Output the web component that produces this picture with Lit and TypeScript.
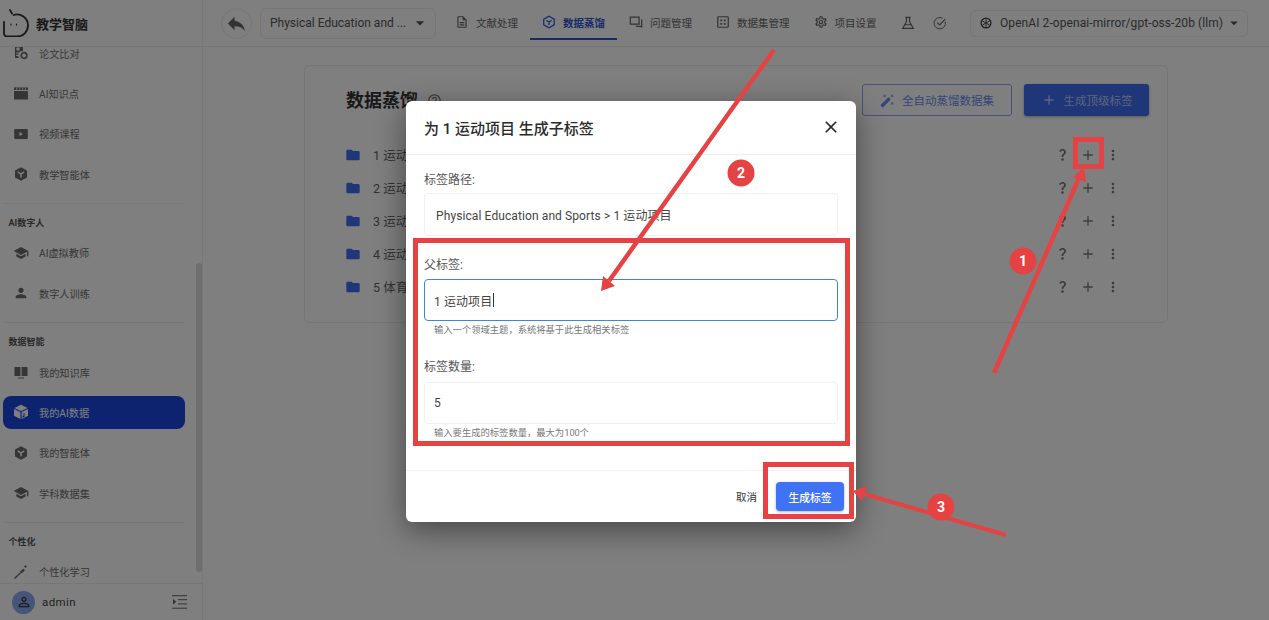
import { LitElement, html, css, svg } from "lit";
import { customElement } from "lit/decorators.js";

const P = {
  reply: "M10 9V5l-7 7 7 7v-4.1c5 0 8.5 1.6 11 5.1-1-5-4-10-11-11z",
  drop: "M7 10l5 5 5-5z",
  folder: "M10 4H4c-1.1 0-1.99.9-1.99 2L2 18c0 1.1.9 2 2 2h16c1.1 0 2-.9 2-2V8c0-1.1-.9-2-2-2h-8l-2-2z",
  close: "M19 6.41L17.59 5 12 10.59 6.41 5 5 6.41 10.59 12 5 17.59 6.41 19 12 13.41 17.59 19 19 17.59 13.41 12z",
  add: "M19 13h-6v6h-2v-6H5v-2h6V5h2v6h6v2z",
  more: "M12 8c1.1 0 2-.9 2-2s-.9-2-2-2-2 .9-2 2 .9 2 2 2zm0 2c-1.1 0-2 .9-2 2s.9 2 2 2 2-.9 2-2-.9-2-2-2zm0 6c-1.1 0-2 .9-2 2s.9 2 2 2 2-.9 2-2-.9-2-2-2z",
  school: "M5 13.18v4L12 21l7-3.82v-4L12 17l-7-3.82zM12 3 1 9l11 6 9-4.91V17h2V9L12 3z",
  person: "M12 12c2.21 0 4-1.79 4-4s-1.79-4-4-4-4 1.79-4 4 1.79 4 4 4zm0 2c-2.67 0-8 1.34-8 4v2h16v-2c0-2.66-5.33-4-8-4z",
  personO: "M12 5.9c1.16 0 2.1.94 2.1 2.1s-.94 2.1-2.1 2.1S9.9 9.16 9.9 8s.94-2.1 2.1-2.1m0 9c2.97 0 6.1 1.46 6.1 2.1v1.1H5.9V17c0-.64 3.13-2.1 6.1-2.1M12 4C9.79 4 8 5.79 8 8s1.79 4 4 4 4-1.79 4-4-1.79-4-4-4zm0 9c-2.67 0-8 1.34-8 4v3h16v-3c0-2.66-5.33-4-8-4z",
  wand: "M7.5 5.6 10 7 8.6 4.5 10 2 7.5 3.4 5 2l1.4 2.5L5 7zm12 9.8L17 14l1.4 2.5L17 19l2.5-1.4L22 19l-1.4-2.5L22 14zM22 2l-2.5 1.4L17 2l1.4 2.5L17 7l2.5-1.4L22 7l-1.4-2.5zm-7.63 5.29a.996.996 0 0 0-1.41 0L1.29 18.96a.996.996 0 0 0 0 1.41l2.34 2.34c.39.39 1.02.39 1.41 0L16.7 11.05a.996.996 0 0 0 0-1.41l-2.33-2.35z",
  help: "M11 18h2v-2h-2v2zm1-16C6.48 2 2 6.48 2 12s4.48 10 10 10 10-4.48 10-10S17.52 2 12 2zm0 18c-4.41 0-8-3.59-8-8s3.59-8 8-8 8 3.59 8 8-3.59 8-8 8zm0-14c-2.21 0-4 1.79-4 4h2c0-1.1.9-2 2-2s2 .9 2 2c0 2-3 1.75-3 5h2c0-2.25 3-2.5 3-5 0-2.21-1.79-4-4-4z",
  q: "M11.07 12.85c.77-1.39 2.25-2.21 3.11-3.44.91-1.29.4-3.7-2.18-3.7-1.69 0-2.52 1.28-2.87 2.34L6.54 6.96C7.25 4.83 9.18 3 11.99 3c2.35 0 3.96 1.07 4.78 2.41.7 1.15 1.11 3.3.03 4.9-1.2 1.77-2.35 2.31-2.97 3.45-.25.46-.35.76-.35 2.24h-2.89c-.01-.78-.13-2.05.48-3.15zM14 20c0 1.1-.9 2-2 2s-2-.9-2-2 .9-2 2-2 2 .9 2 2z",
  doc: "M8 16h8v2H8zm0-4h8v2H8zm6-10H6c-1.1 0-2 .9-2 2v16c0 1.1.89 2 1.99 2H18c1.1 0 2-.9 2-2V8l-6-6zm4 18H6V4h7v5h5v11z",
  gear: "M19.43 12.98c.04-.32.07-.64.07-.98 0-.34-.03-.66-.07-.98l2.11-1.65c.19-.15.24-.42.12-.64l-2-3.46c-.09-.16-.26-.25-.44-.25-.06 0-.12.01-.17.03l-2.49 1c-.52-.4-1.08-.73-1.69-.98l-.38-2.65C14.46 2.18 14.25 2 14 2h-4c-.25 0-.46.18-.49.42l-.38 2.65c-.61.25-1.17.59-1.69.98l-2.49-1c-.06-.02-.12-.03-.18-.03-.17 0-.34.09-.43.25l-2 3.46c-.13.22-.07.49.12.64l2.11 1.65c-.04.32-.07.65-.07.98 0 .33.03.66.07.98l-2.11 1.65c-.19.15-.24.42-.12.64l2 3.46c.09.16.26.25.44.25.06 0 .12-.01.17-.03l2.49-1c.52.4 1.08.73 1.69.98l.38 2.65c.03.24.24.42.49.42h4c.25 0 .46-.18.49-.42l.38-2.65c.61-.25 1.17-.59 1.69-.98l2.49 1c.06.02.12.03.18.03.17 0 .34-.09.43-.25l2-3.46c.12-.22.07-.49-.12-.64l-2.11-1.65zm-1.98-1.71c.04.31.05.52.05.73 0 .21-.02.43-.05.73l-.14 1.13.89.7 1.08.84-.7 1.21-1.27-.51-1.04-.42-.9.68c-.43.32-.84.56-1.25.73l-1.06.43-.16 1.13-.2 1.35h-1.4l-.19-1.35-.16-1.13-1.06-.43c-.43-.18-.83-.41-1.23-.71l-.91-.7-1.06.43-1.27.51-.7-1.21 1.08-.84.89-.7-.14-1.13c-.03-.31-.05-.54-.05-.74s.02-.43.05-.73l.14-1.13-.89-.7-1.08-.84.7-1.21 1.27.51 1.04.42.9-.68c.43-.32.84-.56 1.25-.73l1.06-.43.16-1.13.2-1.35h1.39l.19 1.35.16 1.13 1.06.43c.43.18.83.41 1.23.71l.91.7 1.06-.43 1.27-.51.7 1.21-1.07.85-.89.7.14 1.13zM12 8c-2.21 0-4 1.79-4 4s1.79 4 4 4 4-1.79 4-4-1.79-4-4-4zm0 6c-1.1 0-2-.9-2-2s.9-2 2-2 2 .9 2 2-.9 2-2 2z",
};

const icon = (d: string, size: number, cls = "") =>
  html`<svg class=${cls} width=${size} height=${size} viewBox="0 0 24 24" fill="currentColor"><path d=${d}></path></svg>`;

const box = (inner: unknown, size = 16) =>
  html`<svg width=${size} height=${size} viewBox="0 0 16 16" fill="none">${inner}</svg>`;

const NAV: Record<string, unknown> = {
  compare: box(svg`<path fill="#6b6b6b" d="M2 1h8v5.2a4 4 0 0 0-3.6 6.8H2z"/><rect x="3.5" y="2.5" width="3" height="3" fill="#fefefe"/><circle cx="11" cy="10.5" r="2.8" stroke="#6b6b6b" stroke-width="1.7"/><path stroke="#fefefe" d="M3 8h3M3 10.5h2.5"/>`),
  clap: box(svg`<rect x="1" y="6" width="14" height="8.5" rx=".6" fill="#6b6b6b"/><path fill="#6b6b6b" d="M1 2.4h14V5H1z"/><path stroke="#fefefe" stroke-width=".8" d="M4 2.4 3.2 5M7 2.4 6.2 5M10 2.4 9.2 5M13 2.4 12.2 5"/>`),
  video: box(svg`<rect x="1.2" y="3" width="13.6" height="10" rx="1" fill="#6b6b6b"/><path fill="#fefefe" d="M6.5 6v4l3.4-2z"/>`),
  agent: box(svg`<path fill="#6b6b6b" d="M8 1.2 14 4.4v7.2L8 14.8 2 11.6V4.4z"/><path stroke="#fefefe" stroke-width="1.5" d="M4.8 5.8 8 8l3.2-2.2M8 8v3.4"/>`),
  book: box(svg`<path fill="#6b6b6b" d="M1.5 3h5.9v9H1.5zM8.6 3h5.9v9H8.6z"/><path stroke="#6b6b6b" d="M5 14h6"/>`),
  cube: box(svg`<path fill="#fefefe" d="M8 .8 14.6 4 8 7.2 1.4 4z"/><path fill="#fefefe" d="M1 5l6.4 3.1V15L1 11.8z"/><path fill="#fefefe" d="M15 5 8.6 8.1V15l6.4-3.2z"/><path stroke="#1a47e0" d="M11 9v3.6"/><circle cx="10.3" cy="12.6" r=".9" fill="#1a47e0"/>`),
  wandS: box(svg`<path stroke="#6b6b6b" stroke-width="1.4" d="M1.5 14.5 11 5.5"/><path stroke="#6b6b6b" stroke-width="2.4" d="M8 8.4l3-2.9"/><path stroke="#6b6b6b" stroke-width=".8" d="M12.5 1v3M11 2.5h3"/>`),
};

const GROUPS = [
  { items: [["论文比对", "compare"], ["AI知识点", "clap"], ["视频课程", "video"], ["教学智能体", "agent"]] },
  { title: "AI数字人", items: [["AI虚拟教师", "school"], ["数字人训练", "person"]] },
  { title: "数据智能", items: [["我的知识库", "book"], ["我的AI数据", "cube"], ["我的智能体", "agent"], ["学科数据集", "school"]] },
  { title: "个性化", items: [["个性化学习", "wandS"]] },
];

const ROWS = ["1 运动项目", "2 运动技能", "3 运动训练", "4 运动竞赛", "5 体育文化"];

@customElement("app-root")
export class AppRoot extends LitElement {
  static styles = css`
    :host { display: block; width: 1269px; height: 620px; position: relative; overflow: hidden;
      font-family: Roboto, "Noto Sans CJK SC", sans-serif; color: #444; background: #fefefe; }
    svg { display: block; flex: none; }
    .page { display: flex; width: 100%; height: 100%; }
    aside { width: 203px; flex: none; display: flex; flex-direction: column; border-right: 1px solid #f0f0f0; box-sizing: border-box; position: relative; }
    .brand { height: 47px; flex: none; box-sizing: border-box; display: flex; align-items: center; gap: 6px; padding-left: 2px; border-bottom: 1px solid #eee; font-size: 13px; font-weight: 700; color: #333; }
    .nav { flex: 1; min-height: 0; overflow: hidden; }
    .navin { margin-top: -14px; }
    .group { padding-bottom: 9px; margin-bottom: 8.5px; border-bottom: 1px solid #f0f0f0; width: 182px; margin-left: 3px; }
    .group:last-child { border-bottom: 0; }
    .gtitle { height: 20px; line-height: 20px; font-size: 9px; font-weight: 700; color: #555; padding-left: 5.5px; }
    .row { height: 40.33px; display: flex; align-items: center; }
    .item { height: 33px; width: 100%; border-radius: 8px; display: flex; align-items: center; gap: 10px; padding-left: 10px; box-sizing: border-box; font-size: 10.2px; color: #6e6e6e; }
    .item.active { background: #1a47e0; color: #fefefe; }
    .item svg { color: #6b6b6b; }
    .sb { position: absolute; left: 196px; top: 263px; width: 6px; height: 309px; border-radius: 3px; background: #dcdcdc; }
    .foot { height: 37px; flex: none; box-sizing: border-box; border-top: 1px solid #ececec; display: flex; align-items: center; padding: 0 15px 0 12px; gap: 7px; font-size: 11.5px; color: #444; letter-spacing: .4px; }
    .avatar { width: 23px; height: 23px; border-radius: 50%; background: #8fa8f5; display: flex; align-items: center; justify-content: center; color: #333; }
    .collapse { margin-left: auto; }
    main { flex: 1; min-width: 0; display: flex; flex-direction: column; }
    header { height: 47px; flex: none; box-sizing: border-box; border-bottom: 1px solid #eee; display: flex; align-items: center; padding: 0 21px 0 18px; }
    .back { width: 31px; height: 31px; border-radius: 50%; border: 1px solid #ececec; box-sizing: border-box; display: flex; align-items: center; justify-content: center; color: #666; margin-right: 8px; }
    .sel { height: 31px; width: 176px; flex: none; box-sizing: border-box; border: 1px solid #ececec; border-radius: 6px; display: flex; align-items: center; justify-content: space-between; padding: 0 5px 0 9px; font-size: 12px; color: #555; letter-spacing: 0; margin-right: 7px; white-space: nowrap; }
    .tab { height: 33px; box-sizing: border-box; display: flex; align-items: center; gap: 7px; padding: 0 12px; font-size: 10.5px; color: #666; border-bottom: 2px solid transparent; }
    .tab.on { color: #2f55d4; border-bottom-color: #2f55d4; font-weight: 700; }
    .tools { display: flex; align-items: center; gap: 18px; margin-left: 12px; color: #666; }
    .model { margin-left: auto; height: 27px; width: 278px; box-sizing: border-box; border: 1px solid #ececec; border-radius: 6px; display: flex; align-items: center; padding: 0 13px 0 8px; gap: 2px; font-size: 12px; color: #555; letter-spacing: .08px; white-space: nowrap; }
    .model .t { margin-left: 5px; }
    .model .c { margin-left: auto; }
    .content { padding: 18px 101px 0 101px; }
    .card { height: 258px; box-sizing: border-box; border: 1px solid #ececec; border-radius: 6px; padding: 18px 18px 0 41px; }
    .chead { display: flex; align-items: center; height: 32px; margin-bottom: 22px; }
    h1 { margin: -2px 0 0; font-size: 18px; font-weight: 700; color: #333; }
    .q { margin-left: 9px; color: #777; }
    .btn { height: 32px; box-sizing: border-box; border-radius: 3px; display: flex; align-items: center; justify-content: center; font-size: 11.5px; }
    .outl { width: 150px; margin-left: auto; border: 1px solid #90a8f0; color: #6c8cf0; gap: 7px; margin-right: 12px; }
    .solid { width: 125px; background: #3f6cf2; color: #b9c8fa; gap: 7px; box-shadow: 0 1px 3px rgba(0,0,0,.3); }
    .trow { height: 33px; display: flex; align-items: center; font-size: 12.5px; color: #666; }
    .trow .f { color: #3f6cf2; margin-right: 12px; margin-left: -1px; }
    .acts { margin-left: auto; display: flex; margin-right: 23px; color: #777; }
    .acts span { width: 25.5px; display: flex; justify-content: center; }
    .backdrop { position: absolute; inset: 0; background: rgba(0,0,0,.5); z-index: 2; }
    .modal { position: absolute; z-index: 3; left: 406px; top: 101px; width: 450px; height: 421px; background: #fff; border-radius: 6px; box-shadow: 0 8px 30px rgba(0,0,0,.45); display: flex; flex-direction: column; color: #333; }
    .mhead { height: 54px; flex: none; box-sizing: border-box; border-bottom: 1px solid #eeeeee; display: flex; align-items: center; justify-content: space-between; padding: 0 15px 1px 18px; font-size: 15px; font-weight: 500; color: #2b2b2b; }
    .mbody { flex: 1; padding: 16px 18px 0; }
    label { display: block; height: 18px; line-height: 18px; font-size: 12px; color: #555; }
    .field { height: 43px; box-sizing: border-box; border: 1px solid #f0f0f0; border-radius: 4px; display: flex; align-items: center; padding: 0 11px 1px; font-size: 12px; color: #444; margin-top: 4px; letter-spacing: .1px; }
    .path { margin-bottom: 20px; }
    .input { height: 42px; margin-top: 5px; padding: 0 9px; }
    .input.focus { border: 1.5px solid #3d86d8; }
    .caret { width: 1px; height: 14px; background: #333; margin-left: 1px; }
    .hint { height: 12px; line-height: 12px; margin: 3px 0 22px; padding-left: 10px; font-size: 9.3px; color: #777; }
    .second { margin-top: 6px; }
    .mfoot { height: 52px; flex: none; box-sizing: border-box; border-top: 1px solid #f2f2f2; display: flex; align-items: center; justify-content: flex-end; padding: 0 12px 0 0; gap: 11px; font-size: 10.5px; color: #333; }
    .cancel { padding: 0 8px; }
    .gen { width: 68px; height: 29px; border-radius: 4px; background: #3f72f5; color: #fff; display: flex; align-items: center; justify-content: center; font-size: 10.8px; font-weight: 500; box-shadow: 0 1px 3px rgba(0,0,0,.3); }
    .marks { position: absolute; z-index: 4; inset: 0; pointer-events: none; }
    .marks text { font-family: Roboto, sans-serif; font-size: 14px; font-weight: 700; fill: #fff; text-anchor: middle; }
  `;

  private navIcon(k: string) {
    if (k === "school") return icon(P.school, 16);
    if (k === "person") return icon(P.person, 16);
    return NAV[k];
  }

  render() {
    return html`
      <div class="page">
        <aside>
          <div class="brand">
            <svg width="28" height="28" viewBox="0 0 28 28" fill="none" stroke="#333" stroke-width="1.8" stroke-linecap="round">
              <path d="M11.5 6a11 11 0 0 1 14.5 10.5 11 11 0 0 1-11 11H5a3 3 0 0 1-3-3V13"/>
              <path d="M8 1l2 3.5"/>
              <path d="M9 15.2v.8M14.5 15.2v.8" stroke-width="1.2"/>
            </svg>
            <span>教学智脑</span>
          </div>
          <div class="nav"><div class="navin">
            ${GROUPS.map(g => html`<div class="group">
              ${g.title ? html`<div class="gtitle">${g.title}</div>` : ""}
              ${g.items.map(([t, k]) => html`<div class="row"><div class="item ${t === "我的AI数据" ? "active" : ""}">${this.navIcon(k)}<span>${t}</span></div></div>`)}
            </div>`)}
          </div></div>
          <div class="sb"></div>
          <div class="foot">
            <div class="avatar">${icon(P.personO, 16)}</div>
            <span>admin</span>
            <svg class="collapse" width="15" height="14" viewBox="0 0 15 14" fill="none" stroke="#666"><path d="M0 .7h15M6 4.7h9M6 8.9h9M0 13.2h15"/><path fill="#666" stroke="none" d="M1 4l3.4 2.8L1 9.6z"/></svg>
          </div>
        </aside>
        <main>
          <header>
            <div class="back">${icon(P.reply, 23)}</div>
            <div class="sel"><span>Physical Education and ...</span>${icon(P.drop, 20)}</div>
            <div class="tab">${icon(P.doc, 14)}<span>文献处理</span></div>
            <div class="tab on">
              <svg width="14" height="14" viewBox="0 0 16 16" fill="none" stroke="currentColor" stroke-width="1.4"><path d="M8 1.5 14 4.8v6.4L8 14.5 2 11.2V4.8z"/><path d="M5 6l3 2 3-2M8 8v3.4"/></svg>
              <span>数据蒸馏</span>
            </div>
            <div class="tab">
              <svg width="14" height="14" viewBox="0 0 16 16" fill="none" stroke="currentColor" stroke-width="1.4"><path d="M1.5 2.5h10v8h-10z"/><path d="M14.5 5v9.5M8 13h6.5"/></svg>
              <span>问题管理</span>
            </div>
            <div class="tab">
              <svg width="14" height="14" viewBox="0 0 16 16" fill="none" stroke="currentColor" stroke-width="1.4"><rect x="2" y="2" width="12" height="12" rx="1"/><path stroke-width="2" d="M5 6h2M9 6h2M5 10h2M9 10h2"/></svg>
              <span>数据集管理</span>
            </div>
            <div class="tab">${icon(P.gear, 14)}<span>项目设置</span></div>
            <div class="tools">
              <svg width="14" height="14" viewBox="0 0 16 16" fill="none" stroke="currentColor" stroke-width="1.4"><path d="M5 1.5h6M6.2 1.5v5L2 14.2h12L9.8 6.5v-5M4.5 10h7"/></svg>
              <svg width="14" height="14" viewBox="0 0 16 16" fill="none" stroke="currentColor" stroke-width="1.1"><path d="M14 6.5A6.5 6.5 0 1 1 11 2.6"/><path stroke-width="1.3" d="M5 7.5l2.6 2.6L14 3.5"/></svg>
            </div>
            <div class="model">
              <svg width="14" height="14" viewBox="0 0 16 16" fill="none" stroke="#444" stroke-width="1.5"><circle cx="8" cy="8" r="5.6"/><path d="M8 2.5v11M3.2 5.2l9.6 5.6M12.8 5.2l-9.6 5.6" stroke-width="1"/></svg>
              <span class="t">OpenAI 2-openai-mirror/gpt-oss-20b (llm)</span>
              <span class="c">${icon(P.drop, 18)}</span>
            </div>
          </header>
          <div class="content">
            <div class="card">
              <div class="chead">
                <h1>数据蒸馏</h1>
                <span class="q">${icon(P.help, 15)}</span>
                <div class="btn outl">${icon(P.wand, 15)}<span>全自动蒸馏数据集</span></div>
                <div class="btn solid">${icon(P.add, 16)}<span>生成顶级标签</span></div>
              </div>
              ${ROWS.map(r => html`<div class="trow">
                <span class="f">${icon(P.folder, 16)}</span><span>${r}</span>
                <div class="acts"><span>${icon(P.q, 15)}</span><span>${icon(P.add, 16)}</span><span>${icon(P.more, 16)}</span></div>
              </div>`)}
            </div>
          </div>
        </main>
      </div>
      <div class="backdrop"></div>
      <div class="modal">
        <div class="mhead"><span>为 1 运动项目 生成子标签</span>${icon(P.close, 20)}</div>
        <div class="mbody">
          <label>标签路径:</label>
          <div class="field path">Physical Education and Sports &gt; 1 运动项目</div>
          <label>父标签:</label>
          <div class="field input focus"><span>1 运动项目</span><span class="caret"></span></div>
          <div class="hint">输入一个领域主题，系统将基于此生成相关标签</div>
          <label>标签数量:</label>
          <div class="field input second">5</div>
          <div class="hint">输入要生成的标签数量，最大为100个</div>
        </div>
        <div class="mfoot"><span class="cancel">取消</span><div class="gen">生成标签</div></div>
      </div>
      <svg class="marks" width="1269" height="620" viewBox="0 0 1269 620" fill="none">
        <g stroke="#e54343">
          <rect x="1075.5" y="139.5" width="26" height="27" stroke-width="5"/>
          <rect x="415.5" y="240.5" width="432" height="203" stroke-width="5"/>
          <rect x="765.5" y="464.5" width="86" height="52" stroke-width="5"/>
          <path stroke-width="4.5" d="M994 373 1079 178"/>
          <path stroke-width="4.5" d="M774 50 609 281"/>
          <path stroke-width="4" d="M1006 535 864 494"/>
        </g>
        <g fill="#e54343">
          <path d="M1084 167 1086 182 1073 177z"/>
          <path d="M601 291 603 276 615 286z"/>
          <path d="M853 491 867 486 862 501z"/>
          <circle cx="1023" cy="261" r="13.5"/>
          <circle cx="741" cy="173" r="13.5"/>
          <circle cx="941" cy="507" r="13.5"/>
        </g>
        <text x="1023" y="266">1</text>
        <text x="741" y="178">2</text>
        <text x="941" y="512">3</text>
      </svg>
    `;
  }
}
